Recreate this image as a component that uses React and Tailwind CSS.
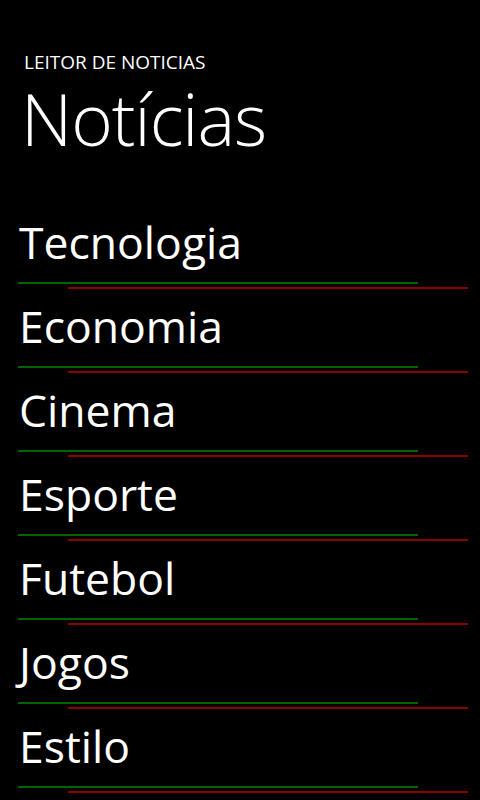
export default function App() {
  const items = ["Tecnologia", "Economia", "Cinema", "Esporte", "Futebol", "Jogos", "Estilo"];
  return (
    <div
      className="w-[480px] h-[800px] overflow-hidden bg-black text-white"
      style={{ fontFamily: '"Open Sans", "Noto Sans", sans-serif' }}
    >
      <div className="pt-[50px] pl-[24px] text-[19px] leading-[24px]">LEITOR DE NOTICIAS</div>
      <div className="mt-[5px] pl-[21px] text-[71px] leading-[80px] font-light tracking-[-1px]">Notícias</div>
      <div className="mt-[58px] flex flex-col">
        {items.map((t) => (
          <div key={t} className="h-[84px] flex flex-col">
            <div className="pl-[19px] text-[44.5px] leading-[50px] h-[50px]">{t}</div>
            <div className="mt-[15px] ml-[18px] w-[400px] h-[2px] bg-[#006400]" />
            <div className="mt-[3px] ml-[68px] w-[400px] h-[2px] bg-[#8b0000]" />
          </div>
        ))}
      </div>
    </div>
  );
}
